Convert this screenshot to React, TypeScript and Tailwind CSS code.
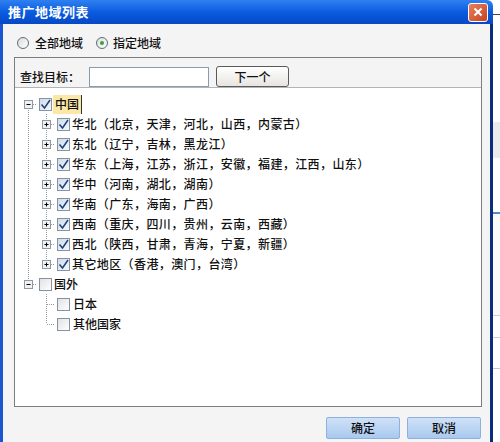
import React from "react";

const font = { fontFamily: '"Noto Sans CJK SC", "Liberation Sans", sans-serif' };

type Seg = "pipe" | "tee" | "ell" | "top" | "blank";

// one 18x20 cell of the dotted tree lines, optionally with an expander box
function Cell({ kind, box }: { kind: Seg; box?: "plus" | "minus" }) {
  const line = { stroke: "#999", strokeWidth: 1, strokeDasharray: "1 1" };
  return (
    <svg width="18" height="20" className="shrink-0">
      {(kind === "pipe" || kind === "tee") && <line x1="9.5" y1="0" x2="9.5" y2="20" {...line} />}
      {kind === "ell" && <line x1="9.5" y1="0" x2="9.5" y2="10" {...line} />}
      {kind === "top" && <line x1="9.5" y1="10" x2="9.5" y2="20" {...line} />}
      {kind !== "pipe" && kind !== "blank" && <line x1="10" y1="10.5" x2="18" y2="10.5" {...line} />}
      {box && (
        <g>
          <rect x="5.5" y="6.5" width="8" height="8" fill="#f1f1f1" stroke="#8c9aa6" />
          <line x1="7.5" y1="10.5" x2="11.5" y2="10.5" stroke="#000" />
          {box === "plus" && <line x1="9.5" y1="8.5" x2="9.5" y2="12.5" stroke="#000" />}
        </g>
      )}
    </svg>
  );
}

function Check({ on }: { on: boolean }) {
  return (
    <div
      className={
        "w-[13px] h-[13px] shrink-0 border border-[#8493a3] flex items-center justify-center " +
        (on ? "bg-linear-to-br from-[#cfdbe8] to-[#f4f8fc]" : "bg-linear-to-br from-[#e2e2e2] to-[#ffffff]")
      }
    >
      {on && (
        <svg width="11" height="11" viewBox="0 0 11 11">
          <path d="M1.5 5.5 L4.5 9 L10 1" fill="none" stroke="#1f3f78" strokeWidth="1.5" />
        </svg>
      )}
    </div>
  );
}

function Radio({ on }: { on: boolean }) {
  return (
    <div className="w-[12px] h-[12px] rounded-full border border-[#5c6d80] bg-linear-to-br from-[#dcdcd6] to-[#ffffff] flex items-center justify-center">
      {on && <div className="w-[4px] h-[4px] rounded-full bg-[#3f9f3f]" />}
    </div>
  );
}

const regions = [
  "华北（北京，天津，河北，山西，内蒙古）",
  "东北（辽宁，吉林，黑龙江）",
  "华东（上海，江苏，浙江，安徽，福建，江西，山东）",
  "华中（河南，湖北，湖南）",
  "华南（广东，海南，广西）",
  "西南（重庆，四川，贵州，云南，西藏）",
  "西北（陕西，甘肃，青海，宁夏，新疆）",
  "其它地区（香港，澳门，台湾）",
];

const abroad = ["日本", "其他国家"];

export default function App() {
  return (
    <div className="w-[500px] h-[442px] flex bg-white overflow-hidden text-[12px] text-[#111] font-medium" style={font}>
      {/* dialog window */}
      <div className="w-[493px] h-full flex flex-col">
        <div className="h-[24px] shrink-0 flex items-center justify-between pl-[8px] pr-[5px] rounded-tr-[6px] bg-linear-to-b from-[#2f80f0] via-[#0a5ce0] to-[#0748c6]">
          <span className="text-white font-bold text-[13px] tracking-[0.5px]">推广地域列表</span>
          <div className="w-[20px] h-[19px] rounded-[3px] border border-white bg-linear-to-br from-[#e8805e] to-[#c4431f] flex items-center justify-center">
            <svg width="10" height="10" viewBox="0 0 10 10">
              <path d="M1.5 1.5 L8.5 8.5 M8.5 1.5 L1.5 8.5" stroke="#fff" strokeWidth="2" />
            </svg>
          </div>
        </div>

        <div className="flex-1 flex flex-col bg-[#f4f4f4] border-l-[3px] border-l-[#1b55cf] border-r-[3px] border-r-[#0b2b7c] pl-[11px] pr-[8px] pt-[9px]">
          {/* radio row */}
          <div className="h-[20px] flex items-center pl-[3px]">
            <Radio on={false} />
            <span className="ml-[6px]">全部地域</span>
            <div className="ml-[13px]">
              <Radio on={true} />
            </div>
            <span className="ml-[5px]">指定地域</span>
          </div>

          {/* group box */}
          <div className="mt-[4px] h-[350px] flex flex-col border border-[#7d7d7d]">
            <div className="h-[30px] shrink-0 flex items-center pt-[8px] pl-[5px] border-b border-[#b4b4b4]">
              <span className="w-[69px]">查找目标：</span>
              <div className="w-[120px] h-[20px] bg-white border border-[#8a9bb0]" />
              <button className="ml-[7px] w-[73px] h-[21px] rounded-[3px] border border-[#5a5a5a] bg-linear-to-b from-[#ffffff] to-[#e6e5e0] flex items-center justify-center text-[12px]">
                下一个
              </button>
            </div>

            <div className="flex-1 bg-white pt-[6px] pl-[4px] flex flex-col">
              <div className="h-[20px] flex items-center">
                <Cell kind="top" box="minus" />
                <div className="ml-[2px]">
                  <Check on={true} />
                </div>
                <span className="ml-[1px] h-[19px] px-[2px] flex items-center bg-[#fbe7a6] border-r border-[#333]">中国</span>
              </div>
              {regions.map((r, i) => (
                <div key={r} className="h-[20px] flex items-center">
                  <Cell kind="pipe" />
                  <Cell kind={i === regions.length - 1 ? "ell" : "tee"} box="plus" />
                  <div className="ml-[2px]">
                    <Check on={true} />
                  </div>
                  <span className="ml-[2px] tracking-[0.4px] whitespace-nowrap">{r}</span>
                </div>
              ))}
              <div className="h-[20px] flex items-center">
                <Cell kind="ell" box="minus" />
                <div className="ml-[2px]">
                  <Check on={false} />
                </div>
                <span className="ml-[2px]">国外</span>
              </div>
              {abroad.map((r, i) => (
                <div key={r} className="h-[20px] flex items-center">
                  <Cell kind="blank" />
                  <Cell kind={i === abroad.length - 1 ? "ell" : "tee"} />
                  <div className="ml-[2px]">
                    <Check on={false} />
                  </div>
                  <span className="ml-[3px]">{r}</span>
                </div>
              ))}
            </div>
          </div>

          {/* bottom buttons */}
          <div className="mt-[10px] flex justify-end gap-[7px] pr-[1px]">
            <button className="w-[74px] h-[22px] rounded-[2px] border border-[#8db0dc] bg-linear-to-b from-[#cfe1f7] to-[#a9c9f0] text-[12px]">
              确定
            </button>
            <button className="w-[74px] h-[22px] rounded-[2px] border border-[#8db0dc] bg-linear-to-b from-[#cfe1f7] to-[#a9c9f0] text-[12px]">
              取消
            </button>
          </div>
        </div>
      </div>

      {/* strip of the application behind */}
      <div className="flex-1 flex flex-col">
        <div className="h-[14px]" />
        <div className="border-t border-[#444] h-[108px]" />
        <div className="h-[36px] bg-[#ececec]" />
        <div className="h-[54px]" />
        <div className="h-[2px] bg-[#5a86d0]" />
        <div className="h-[101px] bg-[#fafafa]" />
        <div className="h-[1px] bg-[#d0d0d0]" />
        <div className="h-[21px]" />
        <div className="h-[1px] bg-[#d0d0d0]" />
        <div className="h-[30px]" />
        <div className="h-[1px] bg-[#c8c8c8]" />
      </div>
    </div>
  );
}
